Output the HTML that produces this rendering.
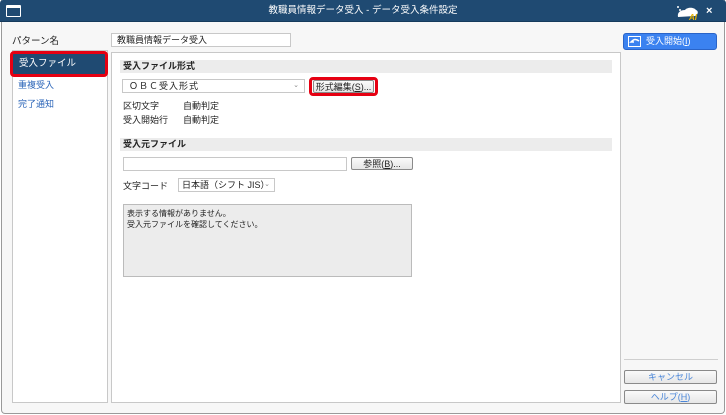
<!DOCTYPE html>
<html><head><meta charset="utf-8"><style>
*{box-sizing:border-box;margin:0;padding:0}
body{width:726px;height:415px;background:#fff;font-family:"Liberation Sans","Noto Sans CJK JP",sans-serif;font-size:9px;color:#222;position:relative;overflow:hidden}
.win{position:absolute;left:1px;top:0;width:724px;height:414px;background:#f7f7f7;border:1px solid #9a9a9a;border-top:none;border-radius:0 0 4px 4px}
.tb{position:absolute;left:0;top:0;width:726px;height:22px;background:#1f4a72;border-bottom:1px solid #153a5c;border-radius:3px 3px 0 0;color:#fff;font-size:9.5px;text-align:center;line-height:21px}
.a{position:absolute}
.panel{background:#fff;border:1px solid #c8c8c8}
.sec{position:absolute;left:8px;right:8px;height:13px;background:#ececec;font-weight:bold;font-size:9px;line-height:13px;padding-left:3px}
.inp{position:absolute;background:#fff;border:1px solid #c8c8c8}
.btn{position:absolute;background:linear-gradient(#fafafa,#e6e6e6);border:1px solid #8a8a8a;border-radius:2px;text-align:center;font-size:9px;line-height:12px}
.blue{color:#2a64b8}
</style></head><body>
<div class="win"></div>
<div class="tb">教職員情報データ受入 - データ受入条件設定</div>
<div class="a" style="left:6px;top:5px;width:15px;height:12px;border:1.5px solid #fff;border-top-width:3px;border-radius:1px"></div>
<svg class="a" style="left:674px;top:3px" width="28" height="18"><path d="M4 14 C3 9 7 7 11 7 C13 4 20 4 22 7 C25 8 24 12 21 13 Z" fill="#fff"/><circle cx="4" cy="4" r="1" fill="#fff"/><circle cx="6" cy="7" r="1" fill="#fff"/><text x="15" y="17" font-size="8" font-weight="bold" font-style="italic" fill="#e8b400" font-family="Liberation Sans">AI</text></svg>
<div class="a" style="left:706px;top:5px;color:#fff;font-size:11px;font-weight:bold">×</div>

<div class="a" style="left:12px;top:33px;font-size:9.5px">パターン名</div>
<div class="inp" style="left:111px;top:33px;width:180px;height:14px;padding-left:5px;font-size:9px;line-height:12px">教職員情報データ受入</div>

<div class="a panel" style="left:12px;top:50px;width:96px;height:353px"></div>
<div class="a" style="left:10px;top:51px;width:98px;height:26px;border:3px solid #e60012;border-radius:4px;background:#1f4a72;color:#fff;font-size:9.5px;line-height:20px;padding-left:6px">受入ファイル</div>
<div class="a blue" style="left:18px;top:78px">重複受入</div>
<div class="a blue" style="left:18px;top:97px">完了通知</div>

<div class="a panel" style="left:111px;top:52px;width:510px;height:351px">
  <div class="sec" style="top:7px">受入ファイル形式</div>
  <div class="inp" style="left:10px;top:26px;width:183px;height:14px;padding-left:6px;line-height:12px;letter-spacing:1px">ＯＢＣ受入形式<span style="position:absolute;right:4px;color:#888;font-size:7px">⌄</span></div>
  <div class="a" style="left:197px;top:24px;width:69px;height:19px;border:3px solid #e60012;border-radius:4px"></div>
  <div class="btn" style="left:201px;top:27px;width:61px;height:13px">形式編集(<u>S</u>)...</div>
  <div class="a" style="left:11px;top:46px">区切文字</div><div class="a" style="left:71px;top:46px">自動判定</div>
  <div class="a" style="left:11px;top:60px">受入開始行</div><div class="a" style="left:71px;top:60px">自動判定</div>
  <div class="sec" style="top:85px">受入元ファイル</div>
  <div class="inp" style="left:11px;top:104px;width:224px;height:14px"></div>
  <div class="btn" style="left:239px;top:104px;width:62px;height:13px">参照(<u>B</u>)...</div>
  <div class="a" style="left:11px;top:126px">文字コード</div>
  <div class="inp" style="left:66px;top:125px;width:97px;height:14px;padding-left:3px;line-height:12px">日本語（シフト JIS）<span style="position:absolute;right:4px;color:#888;font-size:7px">⌄</span></div>
  <div class="a" style="left:11px;top:151px;width:289px;height:73px;background:#ececec;border:1px solid #bbb;padding:3px 3px;font-size:8px;line-height:11px">表示する情報がありません。<br>受入元ファイルを確認してください。</div>
</div>

<div class="a" style="left:623px;top:33px;width:94px;height:17px;background:#3b82f0;border:1px solid #2a64c8;border-radius:3px;color:#fff;font-size:9px;line-height:15px;padding-left:22px">受入開始(<u>I</u>)</div>
<svg class="a" style="left:628px;top:36px" width="14" height="11"><rect x="0.5" y="0.5" width="12" height="10" fill="none" stroke="#fff"/><path d="M11 5 C7 2 5 4 3 6 L6 6" fill="none" stroke="#fff" stroke-width="1.5"/></svg>
<div class="a" style="left:624px;top:359px;width:94px;height:1px;background:#cfcfcf"></div>
<div class="btn blue" style="left:624px;top:370px;width:93px;height:14px;color:#4a86d8">キャンセル</div>
<div class="btn blue" style="left:624px;top:390px;width:93px;height:14px;color:#4a86d8">ヘルプ(<u>H</u>)</div>
</body></html>
